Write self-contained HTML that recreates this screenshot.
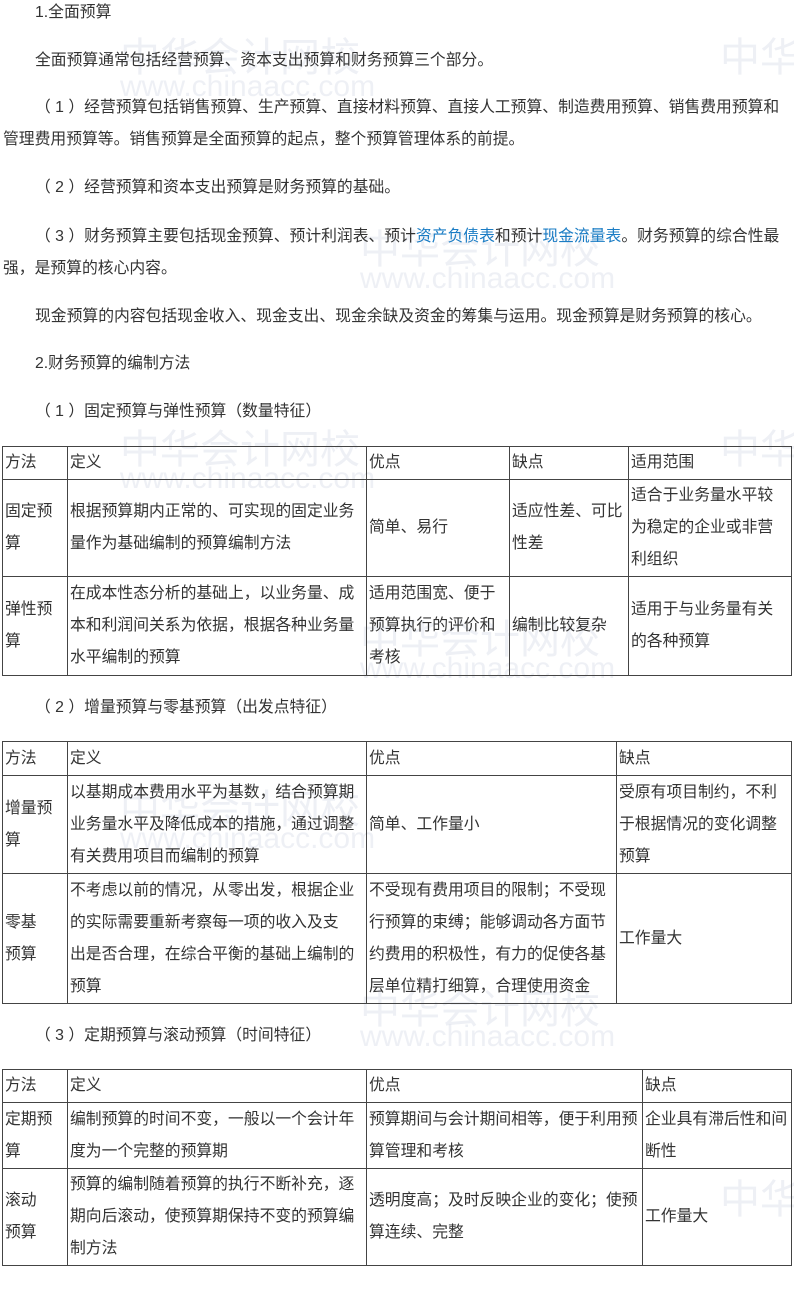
<!DOCTYPE html>
<html><head><meta charset="utf-8"><style>
body{margin:0;width:794px;height:1306px;background:#fff;position:relative;font-family:"Liberation Sans","Noto Sans CJK SC",sans-serif;font-size:15.8px;color:#333;overflow:hidden}
.p{position:absolute;white-space:nowrap;line-height:32px}
a{color:#1a7cc4;text-decoration:none}
table{position:absolute;left:2px;border-collapse:collapse;table-layout:fixed}
td{border:1px solid #444;padding:0 2px;line-height:32px;vertical-align:middle;font-size:15.8px;color:#333;white-space:nowrap;overflow:hidden}
.wm{position:absolute;color:rgba(150,160,190,0.16);font-size:40px;line-height:40px;white-space:nowrap}
.wm2{position:absolute;color:rgba(150,160,190,0.16);font-size:30px;white-space:nowrap}
</style></head><body>
<div class="wm" style="left:120px;top:38px">中华会计网校</div><div class="wm2" style="left:120px;top:70px">www.chinaacc.com</div>
<div class="wm" style="left:720px;top:38px">中华</div>
<div class="wm" style="left:360px;top:230px">中华会计网校</div><div class="wm2" style="left:360px;top:262px">www.chinaacc.com</div>
<div class="wm" style="left:120px;top:430px">中华会计网校</div><div class="wm2" style="left:120px;top:462px">www.chinaacc.com</div>
<div class="wm" style="left:720px;top:430px">中华会</div>
<div class="wm" style="left:360px;top:620px">中华会计网校</div><div class="wm2" style="left:360px;top:652px">www.chinaacc.com</div>
<div class="wm" style="left:120px;top:790px">中华会计网校</div><div class="wm2" style="left:120px;top:822px">www.chinaacc.com</div>
<div class="wm" style="left:360px;top:990px">中华会计网校</div><div class="wm2" style="left:360px;top:1020px">www.chinaacc.com</div>
<div class="wm" style="left:720px;top:1180px">中华</div>

<div class="p" style="left:35px;top:-3px">1.全面预算</div>
<div class="p" style="left:35px;top:45px">全面预算通常包括经营预算、资本支出预算和财务预算三个部分。</div>
<div class="p" style="left:35px;top:92px">（ 1 ）经营预算包括销售预算、生产预算、直接材料预算、直接人工预算、制造费用预算、销售费用预算和</div>
<div class="p" style="left:3px;top:124px">管理费用预算等。销售预算是全面预算的起点，整个预算管理体系的前提。</div>
<div class="p" style="left:35px;top:172px">（ 2 ）经营预算和资本支出预算是财务预算的基础。</div>
<div class="p" style="left:35px;top:221px">（ 3 ）财务预算主要包括现金预算、预计利润表、预计<a>资产负债表</a>和预计<a>现金流量表</a>。财务预算的综合性最</div>
<div class="p" style="left:3px;top:253px">强，是预算的核心内容。</div>
<div class="p" style="left:35px;top:301px">现金预算的内容包括现金收入、现金支出、现金余缺及资金的筹集与运用。现金预算是财务预算的核心。</div>
<div class="p" style="left:35px;top:348px">2.财务预算的编制方法</div>
<div class="p" style="left:35px;top:396px">（ 1 ）固定预算与弹性预算（数量特征）</div>

<table style="top:446px;width:789px">
<colgroup><col style="width:65px"><col style="width:299px"><col style="width:143px"><col style="width:119px"><col style="width:163px"></colgroup>
<tr style="height:33px"><td>方法</td><td>定义</td><td>优点</td><td>缺点</td><td>适用范围</td></tr>
<tr style="height:97px"><td>固定预<br>算</td><td>根据预算期内正常的、可实现的固定业务<br>量作为基础编制的预算编制方法</td><td>简单、易行</td><td>适应性差、可比<br>性差</td><td>适合于业务量水平较<br>为稳定的企业或非营<br>利组织</td></tr>
<tr style="height:99px"><td>弹性预<br>算</td><td>在成本性态分析的基础上，以业务量、成<br>本和利润间关系为依据，根据各种业务量<br>水平编制的预算</td><td>适用范围宽、便于<br>预算执行的评价和<br>考核</td><td>编制比较复杂</td><td>适用于与业务量有关<br>的各种预算</td></tr>
</table>

<div class="p" style="left:35px;top:692px">（ 2 ）增量预算与零基预算（出发点特征）</div>
<table style="top:741px;width:789px">
<colgroup><col style="width:65px"><col style="width:299px"><col style="width:250px"><col style="width:175px"></colgroup>
<tr style="height:34px"><td>方法</td><td>定义</td><td>优点</td><td>缺点</td></tr>
<tr style="height:98px"><td>增量预<br>算</td><td>以基期成本费用水平为基数，结合预算期<br>业务量水平及降低成本的措施，通过调整<br>有关费用项目而编制的预算</td><td>简单、工作量小</td><td>受原有项目制约，不利<br>于根据情况的变化调整<br>预算</td></tr>
<tr style="height:130px"><td>零基<br>预算</td><td>不考虑以前的情况，从零出发，根据企业<br>的实际需要重新考察每一项的收入及支<br>出是否合理，在综合平衡的基础上编制的<br>预算</td><td>不受现有费用项目的限制；不受现<br>行预算的束缚；能够调动各方面节<br>约费用的积极性，有力的促使各基<br>层单位精打细算，合理使用资金</td><td>工作量大</td></tr>
</table>

<div class="p" style="left:35px;top:1020px">（ 3 ）定期预算与滚动预算（时间特征）</div>
<table style="top:1069px;width:789px">
<colgroup><col style="width:65px"><col style="width:299px"><col style="width:276px"><col style="width:149px"></colgroup>
<tr style="height:33px"><td>方法</td><td>定义</td><td>优点</td><td>缺点</td></tr>
<tr style="height:66px"><td>定期预<br>算</td><td>编制预算的时间不变，一般以一个会计年<br>度为一个完整的预算期</td><td>预算期间与会计期间相等，便于利用预<br>算管理和考核</td><td>企业具有滞后性和间<br>断性</td></tr>
<tr style="height:97px"><td>滚动<br>预算</td><td>预算的编制随着预算的执行不断补充，逐<br>期向后滚动，使预算期保持不变的预算编<br>制方法</td><td>透明度高；及时反映企业的变化；使预<br>算连续、完整</td><td>工作量大</td></tr>
</table>
</body></html>
